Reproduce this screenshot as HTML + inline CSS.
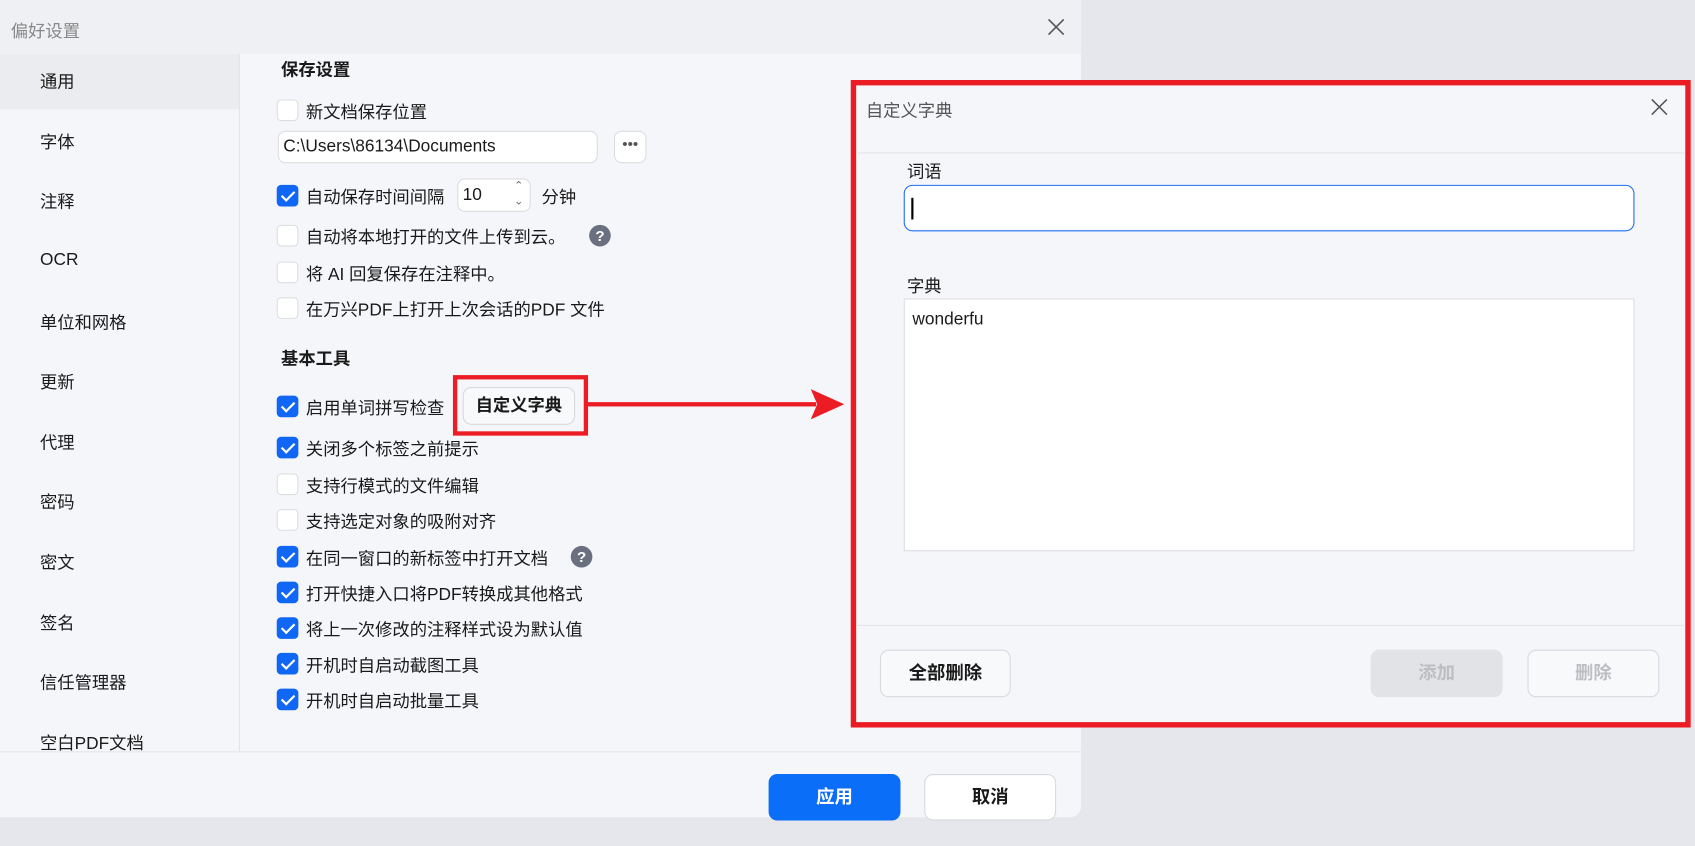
<!DOCTYPE html>
<html><head><meta charset="utf-8"><style>
*{box-sizing:border-box;margin:0;padding:0}
html,body{width:1695px;height:846px;overflow:hidden;background:#e6e7ec}
#w{position:absolute;left:0;top:0;width:1568px;height:783px;transform:scale(1.081);transform-origin:0 0;font-family:"Liberation Sans","Noto Sans CJK SC",sans-serif;color:#1a1a1a}
.a{position:absolute;white-space:nowrap}
#main{position:absolute;left:0;top:0;width:1000px;height:756px;background:#f5f6fa;border-radius:0 0 10px 0}
#tb{position:absolute;left:0;top:0;width:1000px;height:50px;background:#eef0f4}
.side{position:absolute;left:37px;font-size:16px;transform:translateY(-50%)}
.cb{position:absolute;left:256px;width:20px;height:20px;border-radius:4px;border:1px solid #dcdde2;background:#fff}
.cb.on{background:#1067f5;border-color:#1067f5}
.cb.on::after{content:"";position:absolute;left:6px;top:2px;width:5px;height:10px;border:solid #fff;border-width:0 2.5px 2.5px 0;transform:rotate(45deg)}
.lb{position:absolute;left:283px;font-size:16px;transform:translateY(-50%)}
.q{position:absolute;width:20px;height:20px;border-radius:50%;background:#6b7080;color:#fff;font-size:14px;font-weight:bold;text-align:center;line-height:20px}
.btn{position:absolute;border:1px solid #d8d9de;background:#f8f9fb;border-radius:8px;font-size:17px;font-weight:bold;text-align:center}
</style></head><body><div id="w">
<div id="main">
<div id="tb"></div>
<div class="a" style="left:10px;top:15px;font-size:16px;color:#888">偏好设置</div>
<svg class="a" style="left:968px;top:16px" width="18" height="18"><path d="M2 2L16 16M16 2L2 16" stroke="#555" stroke-width="1.5"/></svg>
<div class="a" style="left:0;top:50px;width:221px;height:51px;background:#ebecf0"></div>
<div class="a" style="left:221px;top:50px;width:1px;height:645px;background:#e3e4e8"></div>
<div class="a" style="left:0;top:695px;width:1000px;height:1px;background:#e3e4e8"></div>
<div class="side" style="top:74px">通用</div><div class="side" style="top:130px">字体</div><div class="side" style="top:185px">注释</div><div class="side" style="top:241px">OCR</div><div class="side" style="top:297px">单位和网格</div><div class="side" style="top:352px">更新</div><div class="side" style="top:408px">代理</div><div class="side" style="top:463px">密码</div><div class="side" style="top:519px">密文</div><div class="side" style="top:575px">签名</div><div class="side" style="top:630px">信任管理器</div><div class="side" style="top:686px">空白PDF文档</div>
<div class="lb" style="left:260px;top:63px;font-weight:bold">保存设置</div>
<div class="cb" style="top:92px"></div><div class="lb" style="top:102px">新文档保存位置</div>
<div class="a" style="left:257px;top:121px;width:296px;height:30px;background:#fff;border:1px solid #dcdde2;border-radius:7px;font-size:16px;padding:5px 4px">C:\Users\86134\Documents</div>
<div class="a" style="left:568px;top:121px;width:30px;height:30px;background:#fff;border:1px solid #dcdde2;border-radius:7px;font-size:14px;text-align:center;line-height:22px;color:#555">•••</div>
<div class="cb on" style="top:171px"></div><div class="lb" style="top:181px">自动保存时间间隔</div>
<div class="a" style="left:423px;top:165px;width:68px;height:31px;background:#fff;border:1px solid #dcdde2;border-radius:7px;font-size:16px;padding:6px 4px">10<span style="position:absolute;right:6px;top:0;font-size:10px;line-height:14px;color:#666">⌃<br>⌄</span></div>
<div class="lb" style="left:501px;top:181px">分钟</div>
<div class="cb" style="top:208px"></div><div class="lb" style="top:218px">自动将本地打开的文件上传到云。</div><div class="q" style="left:545px;top:208px">?</div>
<div class="cb" style="top:242px"></div><div class="lb" style="top:252px">将 AI 回复保存在注释中。</div>
<div class="cb" style="top:275px"></div><div class="lb" style="top:285px">在万兴PDF上打开上次会话的PDF 文件</div>
<div class="lb" style="left:260px;top:330px;font-weight:bold">基本工具</div>
<div class="cb on" style="top:366px"></div><div class="lb" style="top:376px">启用单词拼写检查</div>
<div class="btn" style="left:428px;top:358px;width:104px;height:35px;line-height:33px;font-size:16px">自定义字典</div>
<div class="a" style="left:419px;top:347px;width:125px;height:56px;border:4px solid #ec1c24"></div>
<div class="a" style="left:543px;top:372px;width:212px;height:4px;background:#ec1c24"></div>
<svg class="a" style="left:750px;top:360px" width="32" height="28"><path d="M0 0L31 14L0 28L6 14Z" fill="#ec1c24"/></svg>
<div class="cb on" style="top:404px"></div><div class="lb" style="top:414px">关闭多个标签之前提示</div>
<div class="cb" style="top:438px"></div><div class="lb" style="top:448px">支持行模式的文件编辑</div>
<div class="cb" style="top:471px"></div><div class="lb" style="top:481px">支持选定对象的吸附对齐</div>
<div class="cb on" style="top:505px"></div><div class="lb" style="top:515px">在同一窗口的新标签中打开文档</div><div class="q" style="left:528px;top:505px">?</div>
<div class="cb on" style="top:538px"></div><div class="lb" style="top:548px">打开快捷入口将PDF转换成其他格式</div>
<div class="cb on" style="top:571px"></div><div class="lb" style="top:581px">将上一次修改的注释样式设为默认值</div>
<div class="cb on" style="top:604px"></div><div class="lb" style="top:614px">开机时自启动截图工具</div>
<div class="cb on" style="top:637px"></div><div class="lb" style="top:647px">开机时自启动批量工具</div>
<div class="btn" style="left:711px;top:716px;width:122px;height:43px;line-height:41px;background:#0b6ef9;border-color:#0b6ef9;color:#fff">应用</div>
<div class="btn" style="left:855px;top:716px;width:122px;height:43px;line-height:41px;background:#fff">取消</div>
</div>
<div class="a" style="left:787px;top:74px;width:777px;height:599px;border:5px solid #ec1c24;background:#f5f6fa"></div>
<div class="a" style="left:792px;top:141px;width:767px;height:1px;background:#e3e4e8"></div>
<div class="a" style="left:801px;top:89px;font-size:16px;color:#555">自定义字典</div>
<svg class="a" style="left:1527px;top:91px" width="16" height="16"><path d="M1 1L15 15M15 1L1 15" stroke="#555" stroke-width="1.4"/></svg>
<div class="a" style="left:839px;top:145px;font-size:16px">词语</div>
<div class="a" style="left:836px;top:171px;width:676px;height:43px;background:#fff;border:1.5px solid #1a6ef5;border-radius:8px"><div style="position:absolute;left:6px;top:11px;width:2px;height:20px;background:#000"></div></div>
<div class="a" style="left:839px;top:251px;font-size:16px">字典</div>
<div class="a" style="left:836px;top:276px;width:676px;height:234px;background:#fff;border:1px solid #dcdde2;font-size:16px;padding:10px 7px">wonderfu</div>
<div class="a" style="left:792px;top:578px;width:767px;height:1px;background:#e3e4e8"></div>
<div class="btn" style="left:814px;top:601px;width:121px;height:44px;line-height:42px">全部删除</div>
<div class="btn" style="left:1268px;top:601px;width:122px;height:44px;line-height:42px;background:#e2e3e6;border-color:#e2e3e6;color:#bdbec2">添加</div>
<div class="btn" style="left:1413px;top:601px;width:122px;height:44px;line-height:42px;color:#bdbec2">删除</div>
</div></body></html>
